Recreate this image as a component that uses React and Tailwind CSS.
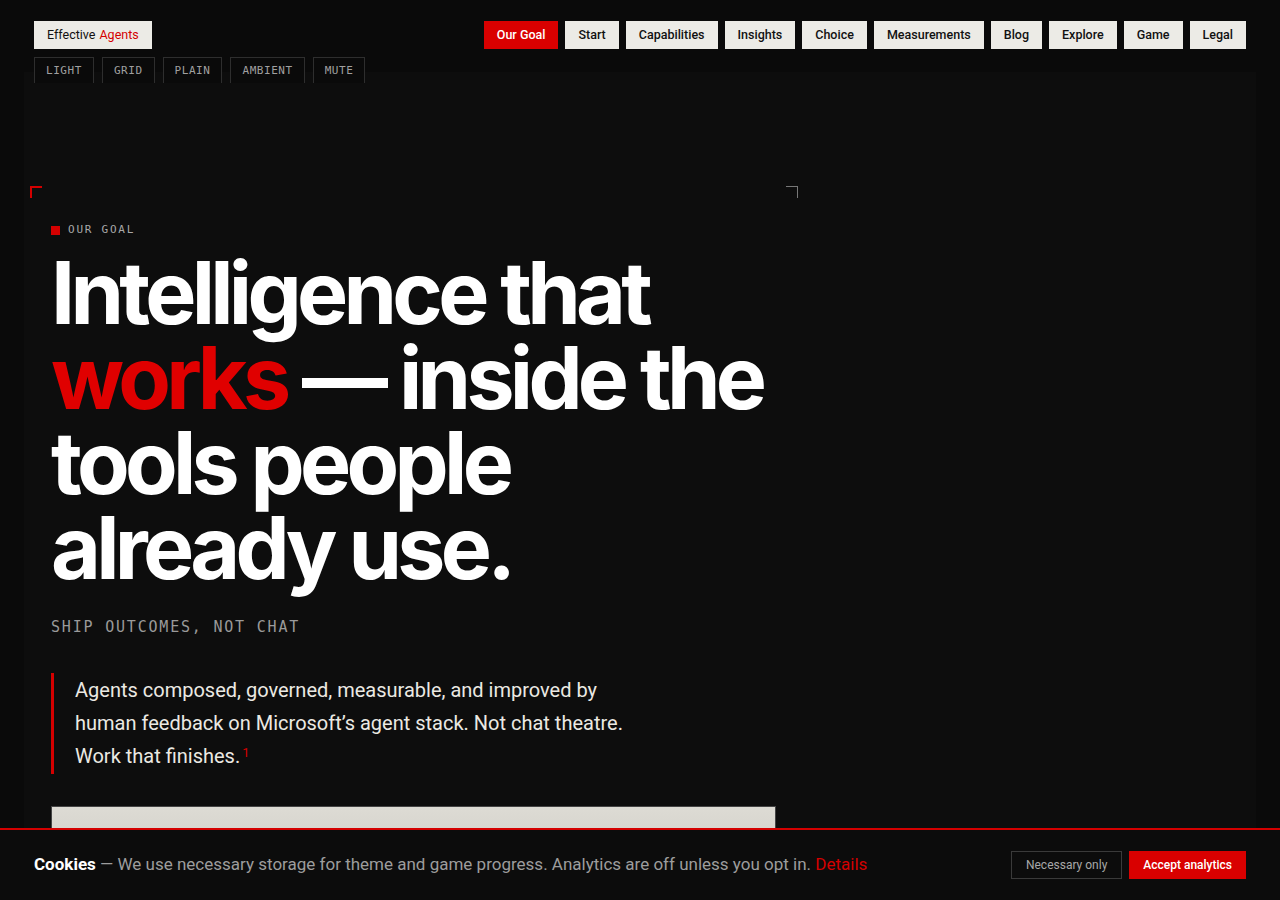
import React from 'react';

const navItems = ['Our Goal', 'Start', 'Capabilities', 'Insights', 'Choice', 'Measurements', 'Blog', 'Explore', 'Game', 'Legal'];
const toggles = ['Light', 'Grid', 'Plain', 'Ambient', 'Mute'];

const sans = { fontFamily: 'Roboto, "Noto Sans", sans-serif' };
const mono = { fontFamily: '"DejaVu Sans Mono", monospace' };

const App = () => {
  return (
    <div className="min-h-screen bg-[#0a0a0a] text-white overflow-hidden" style={sans}>
      {/* header */}
      <header className="relative z-10 px-[34px] pt-[21px] flex justify-between items-start">
        <div className="flex flex-col gap-2">
          <div className="h-7 px-[13px] bg-[#ecebe6] text-[#111] text-[12.5px] flex items-center w-fit">
            Effective <span className="text-[#d40000] ml-1">Agents</span>
          </div>
          <div className="flex gap-2">
            {toggles.map((t) => (
              <button
                key={t}
                className="h-[26px] pt-[2px] px-[11px] bg-[#0a0a0a] border border-b-0 border-[#2e2e2e] text-[#a0a0a0] text-[11px] uppercase tracking-[0.05em]"
                style={mono}
              >
                {t}
              </button>
            ))}
          </div>
        </div>
        <nav className="flex gap-[7px]">
          {navItems.map((item, i) => (
            <a
              key={item}
              className={`h-7 px-[13px] text-[12.5px] font-medium flex items-center ${
                i === 0 ? 'bg-[#d90000] text-white' : 'bg-[#ecebe6] text-[#111]'
              }`}
            >
              {item}
            </a>
          ))}
        </nav>
      </header>

      {/* main panel */}
      <main className="mx-6 -mt-[11px] bg-[#0d0d0d] min-h-[840px] pt-[114px] px-[6px]">
        <section className="relative w-[768px] pt-[36px] pl-[21px]">
          <span className="absolute left-0 top-0 w-3 h-3 border-t-2 border-l-2 border-[#d40000]"></span>
          <span className="absolute right-0 top-0 w-3 h-3 border-t border-r border-[#777]"></span>

          <div className="flex items-center gap-2 text-[11px] tracking-[0.16em] text-[#a8a8a8]" style={mono}>
            <span className="w-[9px] h-[9px] bg-[#d40000]"></span>
            OUR GOAL
          </div>

          <h1
            className="mt-[12px] text-[86px] leading-[85px] font-bold tracking-[-0.055em] text-white"
            style={{ fontFamily: 'Inter, sans-serif' }}
          >
            Intelligence that<br />
            <span className="text-[#e00000]">works</span> — inside the<br />
            tools people<br />
            already use.
          </h1>

          <p className="mt-[25px] text-[15px] tracking-[0.12em] text-[#9a9a9a]" style={mono}>
            SHIP OUTCOMES, NOT CHAT
          </p>

          <blockquote className="mt-[35px] border-l-[3px] border-[#d40000] pl-[21px] max-w-[600px] py-[1px] text-[20px] leading-[33px] text-[#ebe9e3]">
            Agents composed, governed, measurable, and improved by human feedback on Microsoft’s agent stack. Not chat theatre. Work that finishes.
            <sup className="text-[#d40000] text-[13px] ml-[2px]">1</sup>
          </blockquote>

          <div className="mt-[32px] mr-[22px] h-[120px] bg-gradient-to-b from-[#dddbd4] via-[#cfcdc6] to-[#b8bab5] border border-[#444]"></div>
        </section>
      </main>

      {/* cookie bar */}
      <div className="fixed bottom-0 left-0 right-0 h-[72px] bg-[#0c0c0c] border-t-2 border-[#d40000] px-[34px] flex items-center justify-between">
        <p className="text-[17px] text-[#9d9d9d]">
          <span className="font-bold text-white">Cookies</span> — We use necessary storage for theme and game progress. Analytics are off unless you opt in.{' '}
          <a className="text-[#d40000]">Details</a>
        </p>
        <div className="flex gap-[7px]">
          <button className="h-7 px-[14px] border border-[#3a3a3a] text-[#a8a8a8] text-[12px]">Necessary only</button>
          <button className="h-7 px-[14px] bg-[#d90000] text-white text-[12px] font-medium">Accept analytics</button>
        </div>
      </div>
    </div>
  );
};

export default App;
